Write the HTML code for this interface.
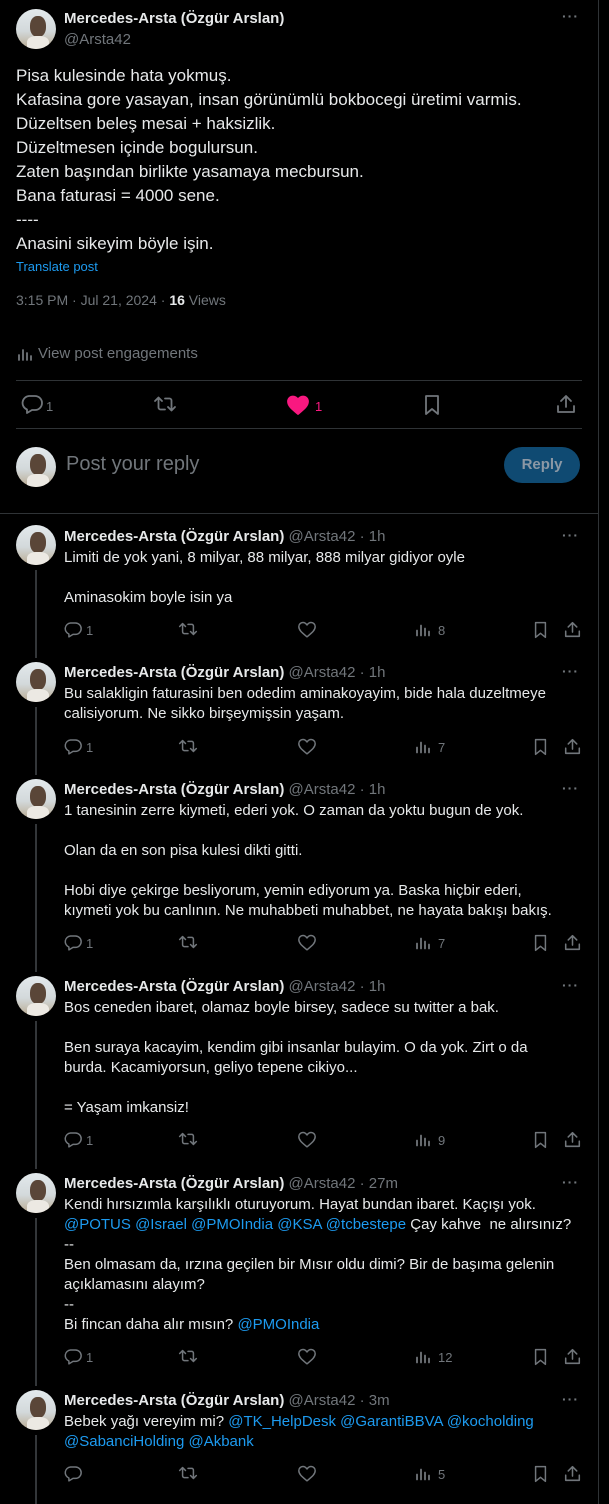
<!DOCTYPE html>
<html><head><meta charset="utf-8">
<style>
*{margin:0;padding:0;box-sizing:border-box}
body{width:609px;height:1504px;background:#000;color:#e7e9ea;font-family:"Liberation Sans",sans-serif;position:relative;overflow:hidden}
.a{position:absolute}
.av{position:absolute;width:40px;height:40px;border-radius:50%;overflow:hidden;background:linear-gradient(180deg,#e3e9ec 0%,#d3d9db 55%,#b9aa92 100%)}
.av:before{content:"";position:absolute;left:14px;top:7px;width:16px;height:21px;border-radius:45%;background:#5a4638}
.av:after{content:"";position:absolute;left:11px;top:27px;width:22px;height:15px;border-radius:40% 40% 0 0;background:#ece9e3}
.nm{font-weight:bold;font-size:15px;color:#e7e9ea;white-space:nowrap}
.g{color:#71767b;font-weight:normal}
.tx{font-size:15px;line-height:20px;white-space:nowrap}
.lk{color:#1d9bf0}
.dots{position:absolute;right:30px;color:#71767b;font-size:14px;letter-spacing:1px;font-weight:bold}
.ln{position:absolute;left:35px;width:2px;background:#333639}
svg{position:absolute;fill:none;stroke:#71767b;stroke-width:1.8;stroke-linecap:round;stroke-linejoin:round}
.n{position:absolute;font-size:13px;color:#71767b}
</style></head><body>
<div class="a" style="left:598px;top:0;width:1px;height:1504px;background:#2f3336"></div>

<div class="av" style="left:16px;top:9px"></div>
<div class="a nm" style="left:64px;top:10px">Mercedes-Arsta (Özgür Arslan)</div>
<div class="a g" style="left:64px;top:31px;font-size:15px">@Arsta42</div>
<div class="dots" style="top:8px">···</div>
<div class="a" style="left:16px;top:64px;font-size:17px;line-height:24px;white-space:nowrap">Pisa kulesinde hata yokmuş.<br>Kafasina gore yasayan, insan görünümlü bokbocegi üretimi varmis.<br>Düzeltsen beleş mesai + haksizlik.<br>Düzeltmesen içinde bogulursun.<br>Zaten başından birlikte yasamaya mecbursun.<br>Bana faturasi = 4000 sene.<br>----<br>Anasini sikeyim böyle işin.</div>
<div class="a lk" style="left:16px;top:259px;font-size:13px">Translate post</div>
<div class="a g" style="left:16px;top:292px;font-size:14px">3:15 PM · Jul 21, 2024 · <b style="color:#e7e9ea">16</b> Views</div>
<svg style="left:17px;top:346px" width="16" height="16" viewBox="0 0 16 16"><path d="M2 14V9M6 14V4M10 14V7M14 14V10"/></svg>
<div class="a g" style="left:38px;top:345px;font-size:15px">View post engagements</div>
<div class="a" style="left:16px;top:380px;width:566px;height:1px;background:#2f3336"></div>
<svg style="left:21px;top:394px" width="22" height="20" viewBox="0 0 22 20"><path d="M8 2h6a7 7 0 0 1 0 14h-3l-5 3v-3.5A7 7 0 0 1 8 2z"/></svg>
<div class="n" style="left:46px;top:399px">1</div>
<svg style="left:153px;top:395px" width="24" height="18" viewBox="0 0 24 18"><path d="M2 6l3.5-3.5L9 6M5.5 3v9.5a2 2 0 0 0 2 2H12M22 12l-3.5 3.5L15 12M18.5 15V5.5a2 2 0 0 0-2-2H12"/></svg>
<svg style="left:287px;top:395px" width="22" height="20" viewBox="0 0 22 20"><path d="M11 19C5 14 1 11 1 6.5 1 3.5 3.3 1.5 6 1.5c2 0 3.8 1.2 5 3 1.2-1.8 3-3 5-3 2.7 0 5 2 5 5C21 11 17 14 11 19z" fill="#f91880" stroke="#f91880"/></svg>
<div class="n" style="left:315px;top:399px;color:#f91880">1</div>
<svg style="left:423px;top:394px" width="18" height="22" viewBox="0 0 18 22"><path d="M3 2h12v18l-6-5-6 5z"/></svg>
<svg style="left:556px;top:394px" width="20" height="20" viewBox="0 0 20 20"><path d="M10 13V2M5 7l5-5 5 5M2 12v6h16v-6"/></svg>
<div class="a" style="left:16px;top:428px;width:566px;height:1px;background:#2f3336"></div>
<div class="av" style="left:16px;top:447px"></div>
<div class="a" style="left:66px;top:453px;font-size:20px;color:#71767b">Post your reply</div>
<div class="a" style="left:504px;top:447px;width:76px;height:36px;border-radius:18px;background:#0f4a72;color:#8b98a5;font-weight:bold;font-size:15px;text-align:center;line-height:36px">Reply</div>
<div class="a" style="left:0;top:513px;width:598px;height:1px;background:#2f3336"></div>

<div class="av" style="left:16px;top:525px"></div>
<div class="ln" style="top:570px;height:88px"></div>
<div class="a nm" style="left:64px;top:528px">Mercedes-Arsta (Özgür Arslan) <span class="g">@Arsta42 · 1h</span></div>
<div class="dots" style="top:527px">···</div>
<div class="a tx" style="left:64px;top:548px">Limiti de yok yani, 8 milyar, 88 milyar, 888 milyar gidiyor oyle<br><br>Aminasokim boyle isin ya</div>

<div class="av" style="left:16px;top:662px"></div>
<div class="ln" style="top:707px;height:68px"></div>
<div class="a nm" style="left:64px;top:664px">Mercedes-Arsta (Özgür Arslan) <span class="g">@Arsta42 · 1h</span></div>
<div class="dots" style="top:663px">···</div>
<div class="a tx" style="left:64px;top:684px">Bu salakligin faturasini ben odedim aminakoyayim, bide hala duzeltmeye<br>calisiyorum. Ne sikko birşeymişsin yaşam.</div>

<div class="av" style="left:16px;top:779px"></div>
<div class="ln" style="top:824px;height:148px"></div>
<div class="a nm" style="left:64px;top:781px">Mercedes-Arsta (Özgür Arslan) <span class="g">@Arsta42 · 1h</span></div>
<div class="dots" style="top:780px">···</div>
<div class="a tx" style="left:64px;top:801px">1 tanesinin zerre kiymeti, ederi yok. O zaman da yoktu bugun de yok.<br><br>Olan da en son pisa kulesi dikti gitti.<br><br>Hobi diye çekirge besliyorum, yemin ediyorum ya. Baska hiçbir ederi,<br>kıymeti yok bu canlının. Ne muhabbeti muhabbet, ne hayata bakışı bakış.</div>

<div class="av" style="left:16px;top:976px"></div>
<div class="ln" style="top:1021px;height:148px"></div>
<div class="a nm" style="left:64px;top:978px">Mercedes-Arsta (Özgür Arslan) <span class="g">@Arsta42 · 1h</span></div>
<div class="dots" style="top:977px">···</div>
<div class="a tx" style="left:64px;top:998px">Bos ceneden ibaret, olamaz boyle birsey, sadece su twitter a bak.<br><br>Ben suraya kacayim, kendim gibi insanlar bulayim. O da yok. Zirt o da<br>burda. Kacamiyorsun, geliyo tepene cikiyo...<br><br>= Yaşam imkansiz!</div>

<div class="av" style="left:16px;top:1173px"></div>
<div class="ln" style="top:1218px;height:168px"></div>
<div class="a nm" style="left:64px;top:1175px">Mercedes-Arsta (Özgür Arslan) <span class="g">@Arsta42 · 27m</span></div>
<div class="dots" style="top:1174px">···</div>
<div class="a tx" style="left:64px;top:1195px">Kendi hırsızımla karşılıklı oturuyorum. Hayat bundan ibaret. Kaçışı yok.<br><span class="lk">@POTUS @Israel @PMOIndia @KSA @tcbestepe</span> Çay kahve&nbsp; ne alırsınız?<br>--<br>Ben olmasam da, ırzına geçilen bir Mısır oldu dimi? Bir de başıma gelenin<br>açıklamasını alayım?<br>--<br>Bi fincan daha alır mısın? <span class="lk">@PMOIndia</span></div>

<div class="av" style="left:16px;top:1390px"></div>
<div class="ln" style="top:1435px;height:69px"></div>
<div class="a nm" style="left:64px;top:1392px">Mercedes-Arsta (Özgür Arslan) <span class="g">@Arsta42 · 3m</span></div>
<div class="dots" style="top:1391px">···</div>
<div class="a tx" style="left:64px;top:1412px">Bebek yağı vereyim mi? <span class="lk">@TK_HelpDesk @GarantiBBVA @kocholding</span><br><span class="lk">@SabanciHolding @Akbank</span></div>

<div id="rows"></div>
<script>
var rows=[[630,"1","8"],[747,"1","7"],[943,"1","7"],[1140,"1","9"],[1357,"1","12"],[1474,"","5"]];
var h="";
rows.forEach(function(r){var y=r[0]-9;
h+='<svg style="left:64px;top:'+y+'px" width="18" height="17" viewBox="0 0 22 20"><path d="M8 2h6a7 7 0 0 1 0 14h-3l-5 3v-3.5A7 7 0 0 1 8 2z"/></svg>';
if(r[1])h+='<div class="n" style="left:86px;top:'+(y+2)+'px">'+r[1]+'</div>';
h+='<svg style="left:178px;top:'+y+'px" width="20" height="16" viewBox="0 0 24 18"><path d="M2 6l3.5-3.5L9 6M5.5 3v9.5a2 2 0 0 0 2 2H12M22 12l-3.5 3.5L15 12M18.5 15V5.5a2 2 0 0 0-2-2H12"/></svg>';
h+='<svg style="left:298px;top:'+y+'px" width="18" height="17" viewBox="0 0 22 20"><path d="M11 19C5 14 1 11 1 6.5 1 3.5 3.3 1.5 6 1.5c2 0 3.8 1.2 5 3 1.2-1.8 3-3 5-3 2.7 0 5 2 5 5C21 11 17 14 11 19z"/></svg>';
h+='<svg style="left:415px;top:'+y+'px" width="16" height="17" viewBox="0 0 16 16"><path d="M2 14V9M6 14V4M10 14V7M14 14V10"/></svg>';
h+='<div class="n" style="left:438px;top:'+(y+2)+'px">'+r[2]+'</div>';
h+='<svg style="left:533px;top:'+y+'px" width="15" height="18" viewBox="0 0 18 22"><path d="M3 2h12v18l-6-5-6 5z"/></svg>';
h+='<svg style="left:564px;top:'+y+'px" width="17" height="17" viewBox="0 0 20 20"><path d="M10 13V2M5 7l5-5 5 5M2 12v6h16v-6"/></svg>';
});
document.getElementById('rows').innerHTML=h;
</script>
</body></html>
